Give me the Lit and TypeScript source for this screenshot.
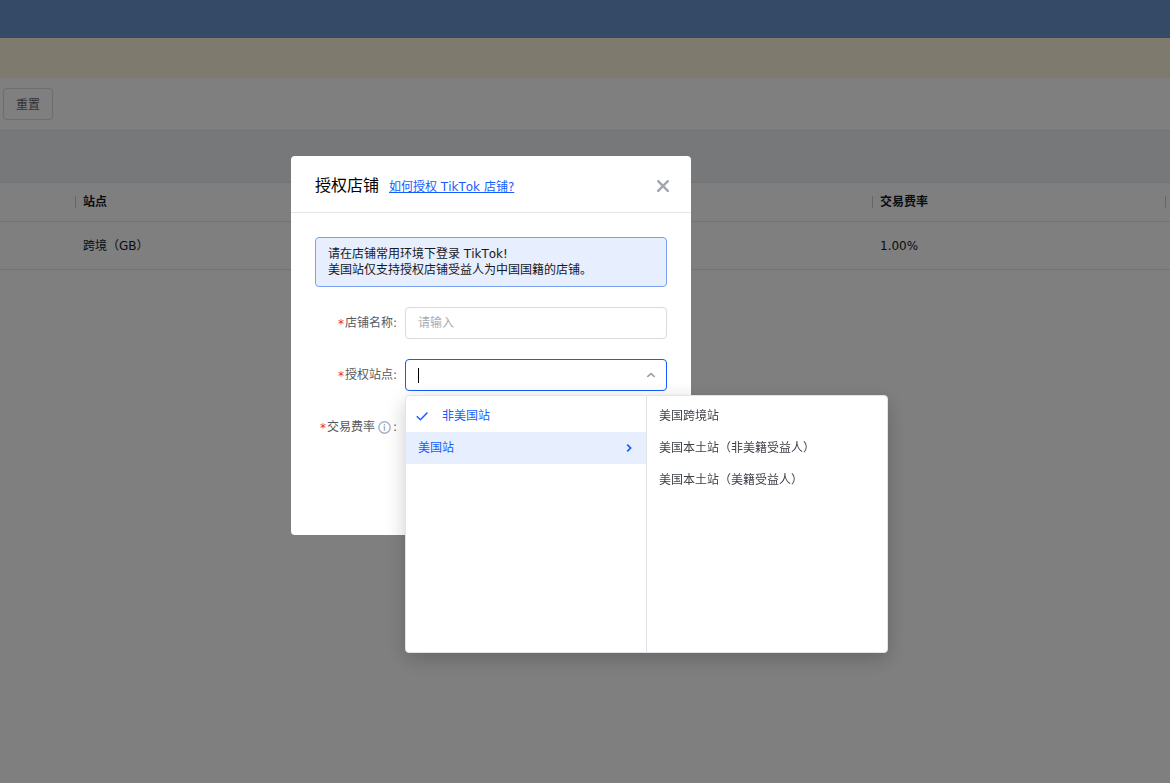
import { LitElement, html, css, svg, nothing } from "lit";
import { customElement, state } from "lit/decorators.js";
import { classMap } from "lit/directives/class-map.js";

interface SiteOption {
  label: string;
  checked?: boolean;
  children?: string[];
}

const SITES: SiteOption[] = [
  { label: "非美国站", checked: true },
  {
    label: "美国站",
    children: ["美国跨境站", "美国本土站（非美籍受益人）", "美国本土站（美籍受益人）"],
  },
];

const baseStyles = css`
  * {
    box-sizing: border-box;
  }
  button,
  input {
    margin: 0;
    font: inherit;
    color: inherit;
  }
`;

const icon = (size: number, body: unknown) => html`
  <svg class="icon" width=${size} height=${size} viewBox="0 0 ${size} ${size}" fill="none" aria-hidden="true">
    ${body}
  </svg>
`;

/* Store list behind the dialog */
@customElement("store-page")
export class StorePage extends LitElement {
  static styles = [
    baseStyles,
    css`
      :host {
        display: block;
        min-height: 100vh;
        background: #fff;
      }
      .topbar {
        height: 38px;
        background: #6a94ce;
      }
      .notice {
        height: 40px;
        background: #fef4dc;
      }
      .filters {
        padding: 10px 3px;
        border-bottom: 1px solid #e4e6ea;
      }
      .reset {
        display: block;
        height: 32px;
        padding: 2px 12px 0;
        border: 1px solid #d9dbdf;
        border-radius: 4px;
        background: #fff;
        color: #5f636b;
      }
      .toolbar {
        height: 51px;
        background: #eef0f4;
      }
      .stores {
        width: 100%;
        table-layout: fixed;
        border-collapse: collapse;
        border-top: 1px solid #e4e6ea;
      }
      .stores th,
      .stores td {
        padding: 0 0 0 8px;
        text-align: left;
        color: #14181f;
        border-bottom: 1px solid #e4e6ea;
      }
      .stores th {
        height: 39px;
        font-weight: 700;
      }
      .stores td {
        height: 48px;
      }
      .head {
        display: block;
        height: 12px;
        margin-left: -8px;
        padding-left: 7px;
        border-left: 1px solid #c9ccd2;
        line-height: 13px;
      }
      .first {
        width: 75px;
      }
      .fee {
        width: 293px;
      }
      .stores .last {
        width: 5px;
        padding: 0;
      }
      .last .head {
        margin: 0;
        padding: 0;
      }
    `,
  ];

  render() {
    return html`
      <div class="topbar"></div>
      <div class="notice"></div>
      <div class="filters"><button class="reset" type="button">重置</button></div>
      <div class="toolbar"></div>
      <table class="stores">
        <thead>
          <tr>
            <th class="first"></th>
            <th><span class="head">站点</span></th>
            <th class="fee"><span class="head">交易费率</span></th>
            <th class="last"><span class="head"></span></th>
          </tr>
        </thead>
        <tbody>
          <tr>
            <td></td>
            <td>跨境（GB）</td>
            <td>1.00%</td>
            <td class="last"></td>
          </tr>
        </tbody>
      </table>
    `;
  }
}

/* Two-level site picker */
@customElement("site-cascader")
export class SiteCascader extends LitElement {
  @state() private active = 1;

  static styles = [
    baseStyles,
    css`
      :host {
        display: block;
        position: relative;
      }
      .control {
        display: flex;
        align-items: center;
        position: relative;
        height: 32px;
        padding: 0 9px 0 12px;
        border: 1px solid #165dff;
        border-radius: 4px;
        background: #fff;
        color: #9aa0ab;
      }
      .search {
        flex: 1;
        min-width: 0;
        height: 30px;
        padding: 0;
        border: 0;
        outline: 0;
        background: none;
        color: #14181f;
      }
      .caret {
        position: absolute;
        left: 12px;
        top: 8px;
        width: 1px;
        height: 15px;
        background: #000;
      }
      .icon {
        display: block;
        flex: none;
      }
      .menu {
        display: flex;
        position: absolute;
        top: 100%;
        left: 0;
        z-index: 1;
        margin-top: 4px;
        border: 1px solid #e1e3e8;
        border-radius: 4px;
        background: #fff;
        box-shadow: 0 6px 20px rgba(0, 0, 0, 0.2);
      }
      .panel {
        width: 240px;
        min-height: 256px;
        padding: 4px 0;
      }
      .panel + .panel {
        box-sizing: content-box;
        min-height: 248px;
        border-left: 1px solid #e1e3e8;
      }
      .option {
        display: flex;
        align-items: center;
        width: 100%;
        height: 32px;
        padding: 0 12px;
        border: 0;
        background: none;
        color: #3f434a;
        text-align: left;
      }
      .main {
        color: #165dff;
      }
      .checked {
        gap: 14px;
        padding-left: 10px;
      }
      .active {
        background: #e7eefe;
      }
      .text {
        flex: 1;
      }
    `,
  ];

  render() {
    const children = SITES[this.active].children ?? [];
    return html`
      <div class="control">
        <input class="search" type="text" role="combobox" aria-label="授权站点" aria-expanded="true" />
        <span class="caret"></span>
        ${icon(12, svg`<path d="M2.3 7.9 6 4.6l3.7 3.3" stroke="currentColor" stroke-width="1.6"/>`)}
      </div>
      <div class="menu">
        <div class="panel" role="listbox" aria-label="授权站点">
          ${SITES.map(
            (site, i) => html`
              <button
                type="button"
                role="option"
                class=${classMap({ option: true, main: true, checked: !!site.checked, active: i === this.active })}
                @mouseenter=${() => (this.active = i)}
              >
                ${site.checked
                  ? icon(12, svg`<path d="M.8 6.2 4.5 9.8 11.4 2.6" stroke="currentColor" stroke-width="1.5"/>`)
                  : nothing}
                <span class="text">${site.label}</span>
                ${site.children
                  ? icon(12, svg`<path d="M5.2 2.6 8.6 6 5.2 9.4" stroke="currentColor" stroke-width="1.7"/>`)
                  : nothing}
              </button>
            `
          )}
        </div>
        <div class="panel" role="listbox" aria-label="美国站">
          ${children.map(
            (label) => html`
              <button type="button" role="option" class="option"><span class="text">${label}</span></button>
            `
          )}
        </div>
      </div>
    `;
  }
}

@customElement("authorize-dialog")
export class AuthorizeDialog extends LitElement {
  static styles = [
    baseStyles,
    css`
      :host {
        display: block;
        width: 400px;
        border-radius: 4px;
        background: #fff;
      }
      .header {
        display: flex;
        align-items: center;
        justify-content: space-between;
        height: 57px;
        padding: 3px 22px 0 24px;
        border-bottom: 1px solid #e4e6ea;
      }
      .heading {
        display: flex;
        align-items: baseline;
        gap: 10px;
      }
      .title {
        margin: 0;
        font-size: 16px;
        font-weight: 400;
        line-height: 24px;
        color: #000;
      }
      .help {
        color: #165dff;
        text-decoration: underline;
      }
      .close {
        display: block;
        padding: 0;
        border: 0;
        background: none;
        color: #a1a6b0;
      }
      .icon {
        display: block;
        flex: none;
      }
      .body {
        display: grid;
        gap: 20px;
        padding: 24px 24px 92px;
      }
      .alert {
        margin: 0;
        padding: 8px 12px;
        border: 1px solid #79a0f5;
        border-radius: 4px;
        background: #e7eefe;
        color: #14181f;
        line-height: 16px;
      }
      .row {
        display: grid;
        grid-template-columns: 82px 1fr;
        gap: 8px;
        align-items: center;
      }
      .label {
        display: flex;
        align-items: center;
        justify-content: flex-end;
        color: #55595f;
      }
      .star {
        padding: 2px 1px 0 0;
        color: #f0283f;
      }
      .info {
        margin: 0 2px 0 3px;
        color: #a6b2cb;
      }
      .field {
        width: 100%;
        height: 32px;
        padding: 0 12px;
        border: 1px solid #d9dbdf;
        border-radius: 4px;
        outline: 0;
        background: #fff;
      }
      .field::placeholder {
        color: #a9adb5;
        opacity: 1;
      }
    `,
  ];

  render() {
    return html`
      <header class="header">
        <div class="heading">
          <h2 class="title">授权店铺</h2>
          <a class="help" href="#help">如何授权 TikTok 店铺?</a>
        </div>
        <button class="close" type="button" aria-label="关闭">
          ${icon(12, svg`<path d="M1.2 1.2 10.8 10.8M10.8 1.2 1.2 10.8" stroke="currentColor" stroke-width="2.4" stroke-linecap="round"/>`)}
        </button>
      </header>
      <form class="body">
        <p class="alert">请在店铺常用环境下登录 TikTok!<br />美国站仅支持授权店铺受益人为中国国籍的店铺。</p>
        <div class="row">
          <label class="label" for="name"><span class="star">*</span>店铺名称:</label>
          <input class="field" id="name" type="text" placeholder="请输入" />
        </div>
        <div class="row">
          <label class="label" for="site"><span class="star">*</span>授权站点:</label>
          <site-cascader id="site"></site-cascader>
        </div>
        <div class="row">
          <label class="label" for="fee">
            <span class="star">*</span>交易费率
            <span class="info">
              ${icon(
                13,
                svg`<circle cx="6.5" cy="6.5" r="5.7" stroke="currentColor" stroke-width="1.4"/>
                  <path d="M6.5 3v1.5M5.4 5.9h1.1v3.9" stroke="currentColor" stroke-width="1.4"/>`
              )} </span
            >:
          </label>
          <input class="field" id="fee" type="text" />
        </div>
      </form>
    `;
  }
}

@customElement("app-root")
export class AppRoot extends LitElement {
  static styles = css`
    :host {
      display: block;
      font-family: "DejaVu Sans", "Noto Sans CJK SC", sans-serif;
      font-size: 12px;
      font-kerning: none;
      line-height: 16px;
    }
    .mask {
      display: flex;
      align-items: flex-start;
      justify-content: center;
      box-sizing: border-box;
      position: fixed;
      inset: 0;
      padding: 156px 188px 0 0;
      background: rgba(0, 0, 0, 0.5);
    }
  `;

  render() {
    return html`
      <store-page></store-page>
      <div class="mask"><authorize-dialog role="dialog" aria-label="授权店铺"></authorize-dialog></div>
    `;
  }
}
